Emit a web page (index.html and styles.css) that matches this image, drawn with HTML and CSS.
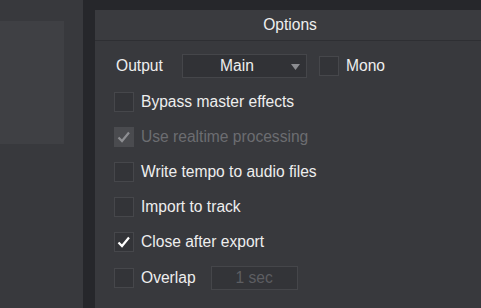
FILE: index.html
```html
<!DOCTYPE html>
<html lang="en">
<head>
  <meta charset="UTF-8">
  <title>Export options</title>
  <link rel="stylesheet" href="styles.css">
</head>
<body>
  <aside class="side">
    <div class="side-box"></div>
  </aside>

  <main class="panel">
    <header class="panel-title">Options</header>
    <section class="options">
      <div class="output-row">
        <span class="output-label">Output</span>
        <div class="select">
          <span>Main</span>
          <svg class="arrow" width="9" height="6" viewBox="0 0 9 6"><path d="M0 0 H9 L4.5 6 Z" fill="#8c8d91"/></svg>
        </div>
        <label class="check">
          <span class="box"></span>
          <span>Mono</span>
        </label>
      </div>

      <label class="check">
        <span class="box"></span>
        <span>Bypass master effects</span>
      </label>
      <label class="check disabled">
        <span class="box"><svg width="20" height="20" viewBox="0 0 20 20"><path d="M4.5 10.5 L8 14 L15 5.5" fill="none" stroke="#8d8e92" stroke-width="2.2"/></svg></span>
        <span>Use realtime processing</span>
      </label>
      <label class="check">
        <span class="box"></span>
        <span>Write tempo to audio files</span>
      </label>
      <label class="check">
        <span class="box"></span>
        <span>Import to track</span>
      </label>
      <label class="check">
        <span class="box"><svg width="20" height="20" viewBox="0 0 20 20"><path d="M4.5 10.5 L8 14 L15 5.5" fill="none" stroke="#ffffff" stroke-width="2.2"/></svg></span>
        <span>Close after export</span>
      </label>
      <div class="overlap-row">
        <label class="check">
          <span class="box"></span>
          <span>Overlap</span>
        </label>
        <div class="field">1 sec</div>
      </div>
    </section>
  </main>
</body>
</html>
```

FILE: styles.css
```css
* {
    margin: 0;
    padding: 0;
    box-sizing: border-box;
}
body {
    width: 481px;
    height: 308px;
    overflow: hidden;
    display: flex;
    background: #26272b;
    font-family: "Liberation Sans", Arial, sans-serif;
    font-size: 15.6px;
    color: #eeeeee;
}
.side {
    width: 83px;
    flex-shrink: 0;
    background: #38393d;
    padding-top: 21px;
}
.side-box {
    width: 64px;
    height: 123px;
    background: #3f4044;
}
.panel {
    margin-left: 12px;
    margin-top: 10px;
    width: 390px;
    flex-shrink: 0;
    background: #38393d;
}
.panel-title {
    height: 31px;
    line-height: 29px;
    text-align: center;
    background: #3a3b3f;
    border-bottom: 1px solid #2e2f33;
}
.options {
    padding: 13px 0 0 19px;
    display: flex;
    flex-direction: column;
    gap: 15px;
}
.output-row {
    display: flex;
    align-items: center;
    height: 24px;
    margin-bottom: -1px;
}
.output-label {
    margin-left: 2px;
    width: 45px;
}
.select {
    margin-left: 21px;
    width: 125px;
    height: 24px;
    display: flex;
    align-items: center;
    justify-content: center;
    position: relative;
    padding-right: 15px;
    background: #313236;
    border: 1px solid #45464a;
}
.select .arrow {
    position: absolute;
    right: 6px;
    top: 9px;
}
.output-row .check {
    margin-left: 12px;
}
.check {
    display: flex;
    align-items: center;
    gap: 7px;
    height: 20px;
}
.box {
    width: 20px;
    height: 20px;
    background: #333438;
    border: 1px solid #46474b;
    display: flex;
    align-items: center;
    justify-content: center;
}
.box svg {
    flex-shrink: 0;
}
.disabled {
    color: #6c6d71;
}
.disabled .box {
    background: #4a4b4f;
    border-color: #4a4b4f;
}
.overlap-row {
    display: flex;
    align-items: center;
    height: 24px;
    margin-top: -1px;
}
.field {
    margin-left: 15px;
    width: 87px;
    height: 24px;
    line-height: 22px;
    text-align: center;
    color: #5d5e62;
    background: #333438;
    border: 1px solid #45464a;
}
```
